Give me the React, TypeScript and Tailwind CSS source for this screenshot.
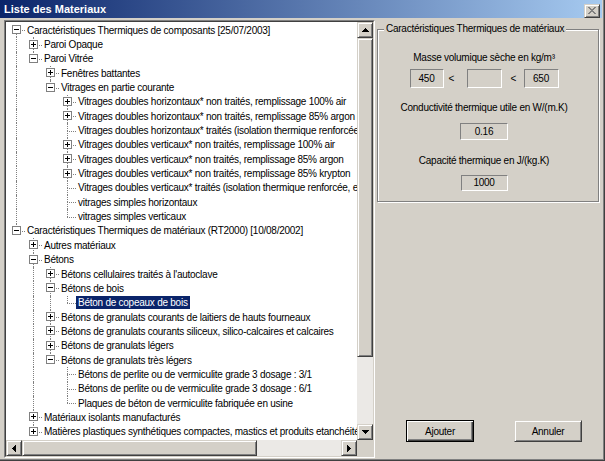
import React from "react";

type TreeNode = {
  label: string;
  kind?: "plus" | "minus" | "leaf";
  selected?: boolean;
  children?: TreeNode[];
};

type Row = {
  label: string;
  guides: boolean[];
  hasNext: boolean;
  first: boolean;
  kind: "plus" | "minus" | "leaf";
  selected?: boolean;
};

const tree: TreeNode[] = [
  {
    label: "Caractéristiques Thermiques de composants [25/07/2003]",
    kind: "minus",
    children: [
      { label: "Paroi Opaque", kind: "plus" },
      {
        label: "Paroi Vitrée",
        kind: "minus",
        children: [
          { label: "Fenêtres battantes", kind: "plus" },
          {
            label: "Vitrages en partie courante",
            kind: "minus",
            children: [
              { label: "Vitrages doubles horizontaux* non traités, remplissage 100% air", kind: "plus" },
              { label: "Vitrages doubles horizontaux* non traités, remplissage 85% argon", kind: "plus" },
              { label: "Vitrages doubles horizontaux* traités (isolation thermique renforcée, en verre)" },
              { label: "Vitrages doubles verticaux* non traités, remplissage 100% air", kind: "plus" },
              { label: "Vitrages doubles verticaux* non traités, remplissage 85% argon", kind: "plus" },
              { label: "Vitrages doubles verticaux* non traités, remplissage 85% krypton", kind: "plus" },
              { label: "Vitrages doubles verticaux* traités (isolation thermique renforcée, en verre)" },
              { label: "vitrages simples horizontaux" },
              { label: "vitrages simples verticaux" },
            ],
          },
        ],
      },
    ],
  },
  {
    label: "Caractéristiques Thermiques de matériaux (RT2000) [10/08/2002]",
    kind: "minus",
    children: [
      { label: "Autres matériaux", kind: "plus" },
      {
        label: "Bétons",
        kind: "minus",
        children: [
          { label: "Bétons cellulaires traités à l'autoclave", kind: "plus" },
          {
            label: "Bétons de bois",
            kind: "minus",
            children: [{ label: "Béton de copeaux de bois", selected: true }],
          },
          { label: "Bétons de granulats courants de laitiers de hauts fourneaux", kind: "plus" },
          { label: "Bétons de granulats courants siliceux, silico-calcaires et calcaires", kind: "plus" },
          { label: "Bétons de granulats légers", kind: "plus" },
          {
            label: "Bétons de granulats très légers",
            kind: "minus",
            children: [
              { label: "Bétons de perlite ou de vermiculite grade 3 dosage : 3/1" },
              { label: "Bétons de perlite ou de vermiculite grade 3 dosage : 6/1" },
              { label: "Plaques de béton de vermiculite fabriquée en usine" },
            ],
          },
        ],
      },
      { label: "Matériaux isolants manufacturés", kind: "plus" },
      { label: "Matières plastiques synthétiques compactes, mastics et produits etanchéité", kind: "plus" },
    ],
  },
];

function flatten(nodes: TreeNode[], guides: boolean[], out: Row[]) {
  nodes.forEach((n, i) => {
    const hasNext = i < nodes.length - 1;
    out.push({
      label: n.label,
      guides,
      hasNext,
      first: guides.length === 0 && i === 0,
      kind: n.kind ?? "leaf",
      selected: n.selected,
    });
    if (n.children && n.kind === "minus") flatten(n.children, [...guides, hasNext], out);
  });
}

const rows: Row[] = [];
flatten(tree, [], rows);

const dotted = "border-dotted border-[#808080]";

function Guide({ on }: { on: boolean }) {
  return (
    <div className="relative w-[17px] shrink-0">
      {on && <div className={`absolute left-[8px] top-0 bottom-0 border-l ${dotted}`} />}
    </div>
  );
}

function Expander({ kind }: { kind: "plus" | "minus" }) {
  return (
    <svg width="9" height="9" viewBox="0 0 9 9" shapeRendering="crispEdges" className="absolute left-[4px] top-1/2 -mt-[5px]">
      <rect x="0.5" y="0.5" width="8" height="8" fill="#fff" stroke="#808080" />
      <rect x="2" y="4" width="5" height="1" fill="#000" />
      {kind === "plus" && <rect x="4" y="2" width="1" height="5" fill="#000" />}
    </svg>
  );
}

function Connector({ row }: { row: Row }) {
  return (
    <div className="relative w-[17px] shrink-0">
      {!row.first && <div className={`absolute left-[8px] top-0 h-1/2 border-l ${dotted}`} />}
      {row.hasNext && <div className={`absolute left-[8px] top-1/2 bottom-0 border-l ${dotted}`} />}
      <div className={`absolute left-[8px] right-0 top-1/2 border-t ${dotted}`} />
      {row.kind !== "leaf" && <Expander kind={row.kind} />}
    </div>
  );
}

function Arrow({ dir }: { dir: "up" | "down" | "left" | "right" }) {
  const pts = {
    up: "3.5,0 7,4 0,4",
    down: "0,0 7,0 3.5,4",
    left: "4,0 4,7 0,3.5",
    right: "0,0 0,7 4,3.5",
  }[dir];
  const vertical = dir === "up" || dir === "down";
  return (
    <svg width={vertical ? 7 : 4} height={vertical ? 4 : 7} shapeRendering="crispEdges">
      <polygon points={pts} fill="#000" />
    </svg>
  );
}

const raised =
  "bg-[#d4d0c8] border border-t-[#d4d0c8] border-l-[#d4d0c8] border-r-[#404040] border-b-[#404040] shadow-[inset_1px_1px_0_#fff,inset_-1px_-1px_0_#808080]";

function ScrollButton({ dir }: { dir: "up" | "down" | "left" | "right" }) {
  return (
    <div className={`flex h-[16px] w-[16px] shrink-0 items-center justify-center ${raised}`}>
      <Arrow dir={dir} />
    </div>
  );
}

function ValueBox({ value, className }: { value: string; className: string }) {
  return (
    <div
      className={`flex items-center justify-center border border-t-[#808080] border-l-[#808080] border-r-white border-b-white leading-none ${className}`}
    >
      {value}
    </div>
  );
}

export default function App() {
  return (
    <div className="flex h-[461px] w-[605px] flex-col overflow-hidden bg-[#d4d0c8] pr-[3px] text-[10px] tracking-[-0.25px] text-black shadow-[inset_-1px_-1px_0_#404040,inset_-2px_-2px_0_#808080] [font-family:'Liberation_Sans',Arial,sans-serif]">
      {/* title bar */}
      <div className="flex h-[18px] shrink-0 items-center justify-between bg-[linear-gradient(90deg,#0a246a,#a6caf0)] pl-[4px] pr-[2px]">
        <span className="text-[11px] font-bold tracking-normal text-white">Liste des Materiaux</span>
        <div className={`mt-[3px] flex h-[14px] w-[16px] items-center justify-center ${raised}`}>
          <svg width="8" height="7" viewBox="0 0 8 7" shapeRendering="crispEdges">
            <path d="M0 0h2v1h-2zM6 0h2v1h-2zM1 1h2v1h-2zM5 1h2v1h-2zM2 2h4v1h-4zM3 3h2v1h-2zM2 4h4v1h-4zM1 5h2v1h-2zM5 5h2v1h-2zM0 6h2v1h-2zM6 6h2v1h-2z" fill="#808080" />
          </svg>
        </div>
      </div>

      {/* body */}
      <div className="flex min-h-0 flex-1 pb-[3px] pl-[4px] pt-[2px]">
        {/* tree view */}
        <div className="h-[438px] w-[371px] shrink-0 border border-t-[#808080] border-l-[#808080] border-r-white border-b-white">
          <div className="grid h-full w-full grid-cols-[1fr_16px] grid-rows-[1fr_16px] border border-t-[#404040] border-l-[#404040] border-r-[#d4d0c8] border-b-[#d4d0c8] bg-white">
            <div className="overflow-hidden pl-[2px] pt-[1px]">
              {rows.map((row, i) => (
                <div key={i} className="flex h-[14.35px]">
                  {row.guides.map((g, j) => (
                    <Guide key={j} on={g} />
                  ))}
                  <Connector row={row} />
                  <span
                    className={`self-center whitespace-nowrap px-[2px] leading-[13px] ${
                      row.selected ? "bg-[#0a246a] text-white" : ""
                    }`}
                  >
                    {row.label}
                  </span>
                </div>
              ))}
            </div>
            {/* vertical scrollbar */}
            <div className="flex flex-col bg-[#ebe9e6]">
              <ScrollButton dir="up" />
              <div className={`h-[319px] shrink-0 ${raised}`} />
              <div className="flex-1" />
              <ScrollButton dir="down" />
            </div>
            {/* horizontal scrollbar */}
            <div className="flex bg-[#ebe9e6]">
              <ScrollButton dir="left" />
              <div className={`w-[235px] shrink-0 ${raised}`} />
              <div className="flex-1" />
              <ScrollButton dir="right" />
            </div>
            <div className="bg-[#d4d0c8]" />
          </div>
        </div>

        {/* right panel */}
        <div className="flex min-w-0 flex-1 flex-col">
          <fieldset className="ml-[2px] mr-[3px] mt-[3px] border border-[#808080] pb-[10px] shadow-[inset_1px_1px_0_#fff,1px_1px_0_#fff]">
            <legend className="ml-[6px] bg-[#d4d0c8] px-[2px] leading-[12px]">
              Caractéristiques Thermiques de matériaux
            </legend>
            <div className="flex flex-col items-center pr-[8px] pt-[16px]">
              <div className="leading-[13px]">Masse volumique sèche en kg/m³</div>
              <div className="mt-[5px] flex h-[19px] items-stretch">
                <ValueBox value="450" className="w-[34px]" />
                <span className="w-[23px] self-center pl-[5px]">&lt;</span>
                <ValueBox value="" className="w-[35px]" />
                <span className="w-[22px] self-center pl-[9px]">&lt;</span>
                <ValueBox value="650" className="w-[35px]" />
              </div>
              <div className="mt-[13px] leading-[13px]">Conductivité thermique utile en W/(m.K)</div>
              <ValueBox value="0.16" className="mt-[9px] h-[17px] w-[48px]" />
              <div className="mt-[14px] leading-[13px]">Capacité thermique en J/(kg.K)</div>
              <ValueBox value="1000" className="mt-[8px] h-[16px] w-[47px]" />
            </div>
          </fieldset>

          <div className="mb-[16px] mt-auto flex gap-[40px] pl-[31px]">
            <button className="h-[22px] w-[68px] border border-black bg-[#d4d0c8] shadow-[inset_1px_1px_0_#fff,inset_-1px_-1px_0_#404040,inset_-2px_-2px_0_#808080]">
              Ajouter
            </button>
            <button className={`h-[22px] w-[68px] ${raised}`}>Annuler</button>
          </div>
        </div>
      </div>
    </div>
  );
}
